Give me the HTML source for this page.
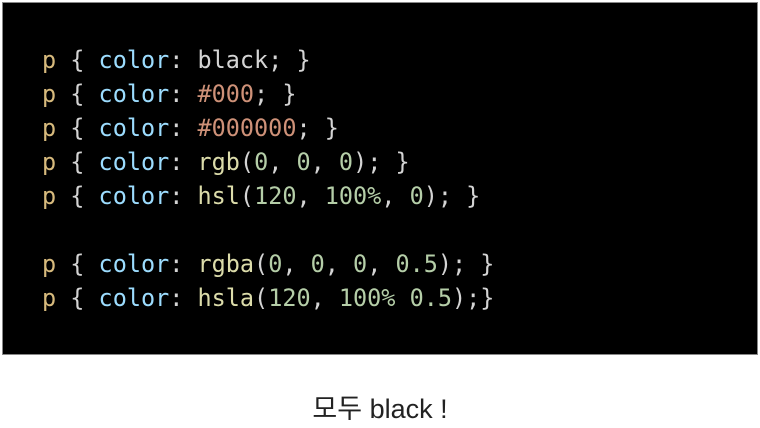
<!DOCTYPE html>
<html><head><meta charset="utf-8"><style>
html,body{margin:0;padding:0;background:#fff;width:760px;height:428px;overflow:hidden}
.box{position:absolute;left:2px;top:2px;width:756px;height:353px;background:#000;border:1px solid #888;box-sizing:border-box}
pre{position:absolute;left:42px;top:43px;margin:0;font-family:"DejaVu Sans Mono","Liberation Mono",monospace;font-size:23.6px;line-height:34px;color:#d4d4d4;transform:scaleX(0.995);transform-origin:left}
.p{color:#d7ba7d}.k{color:#9cdcfe}.n{color:#ce9178}.g{color:#b5cea8}.f{color:#dcdcaa}
.cap{position:absolute;left:0;width:760px;top:387px;text-align:center;font-family:"Liberation Sans","Noto Sans CJK KR",sans-serif;font-size:27px;color:#222}
</style></head><body>
<div class="box"></div>
<pre><span class="p">p</span> { <span class="k">color</span>: black; }
<span class="p">p</span> { <span class="k">color</span>: <span class="n">#000</span>; }
<span class="p">p</span> { <span class="k">color</span>: <span class="n">#000000</span>; }
<span class="p">p</span> { <span class="k">color</span>: <span class="f">rgb</span>(<span class="g">0</span>, <span class="g">0</span>, <span class="g">0</span>); }
<span class="p">p</span> { <span class="k">color</span>: <span class="f">hsl</span>(<span class="g">120</span>, <span class="g">100%</span>, <span class="g">0</span>); }

<span class="p">p</span> { <span class="k">color</span>: <span class="f">rgba</span>(<span class="g">0</span>, <span class="g">0</span>, <span class="g">0</span>, <span class="g">0.5</span>); }
<span class="p">p</span> { <span class="k">color</span>: <span class="f">hsla</span>(<span class="g">120</span>, <span class="g">100% 0.5</span>);}</pre>
<div class="cap">모두 black !</div>
</body></html>
